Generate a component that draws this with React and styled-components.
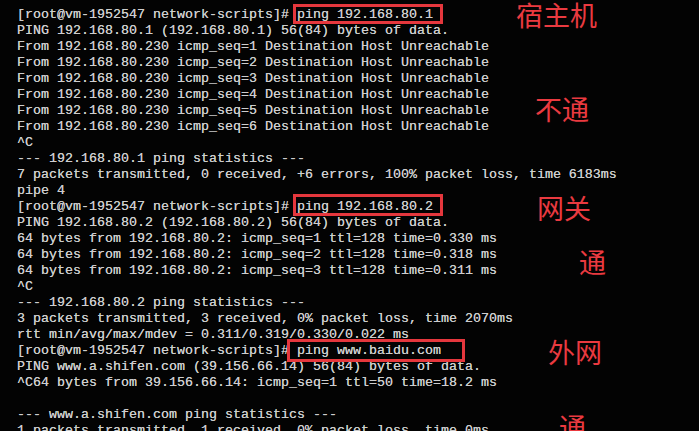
import React from "react";
import styled, { createGlobalStyle } from "styled-components";

const GlobalStyle = createGlobalStyle`
  html, body {
    margin: 0;
    padding: 0;
    background: #000;
  }
  * {
    box-sizing: border-box;
  }
`;

const Screen = styled.div`
  position: relative;
  width: 699px;
  height: 431px;
  overflow: hidden;
  background: #030303;
  padding: 7px 0 0 17px;
`;

const Line = styled.div`
  height: 16px;
  line-height: 16px;
  white-space: pre;
  font-family: "Liberation Mono", "DejaVu Sans Mono", monospace;
  font-size: 13.33px;
  color: #cdcdcd;
  text-shadow: 0 0 0.4px #cdcdcd;
`;

const Boxed = styled.span`
  position: relative;
  &::after {
    content: "";
    position: absolute;
    left: ${(p) => p.$l}px;
    right: ${(p) => p.$r}px;
    top: ${(p) => p.$t}px;
    bottom: ${(p) => p.$b}px;
    border: 3px solid #e5373d;
  }
`;

const Note = styled.div`
  position: absolute;
  left: ${(p) => p.$x}px;
  top: ${(p) => p.$y}px;
  font-family: "Noto Sans CJK SC", sans-serif;
  font-size: 27px;
  line-height: 1.1;
  color: #ea3a40;
`;

const prompt = "[root@vm-1952547 network-scripts]# ";
const unreach = (n) =>
  `From 192.168.80.230 icmp_seq=${n} Destination Host Unreachable`;
const reply = (n, t) =>
  `64 bytes from 192.168.80.2: icmp_seq=${n} ttl=128 time=${t} ms`;

export default function App() {
  return (
    <>
      <GlobalStyle />
      <Screen>
        <Line>
          {prompt}
          <Boxed $l={-4} $r={-10} $t={-3} $b={-2}>ping 192.168.80.1</Boxed>
        </Line>
        <Line>PING 192.168.80.1 (192.168.80.1) 56(84) bytes of data.</Line>
        {[1, 2, 3, 4, 5, 6].map((n) => (
          <Line key={n}>{unreach(n)}</Line>
        ))}
        <Line>^C</Line>
        <Line>--- 192.168.80.1 ping statistics ---</Line>
        <Line>
          7 packets transmitted, 0 received, +6 errors, 100% packet loss, time 6183ms
        </Line>
        <Line>pipe 4</Line>
        <Line>
          {prompt}
          <Boxed $l={-4} $r={-10} $t={-5} $b={-2}>ping 192.168.80.2</Boxed>
        </Line>
        <Line>PING 192.168.80.2 (192.168.80.2) 56(84) bytes of data.</Line>
        <Line>{reply(1, "0.330")}</Line>
        <Line>{reply(2, "0.318")}</Line>
        <Line>{reply(3, "0.311")}</Line>
        <Line>^C</Line>
        <Line>--- 192.168.80.2 ping statistics ---</Line>
        <Line>3 packets transmitted, 3 received, 0% packet loss, time 2070ms</Line>
        <Line>rtt min/avg/max/mdev = 0.311/0.319/0.330/0.022 ms</Line>
        <Line>
          {prompt}
          <Boxed $l={-10} $r={-24} $t={-4} $b={-4}>ping www.baidu.com</Boxed>
        </Line>
        <Line>PING www.a.shifen.com (39.156.66.14) 56(84) bytes of data.</Line>
        <Line>^C64 bytes from 39.156.66.14: icmp_seq=1 ttl=50 time=18.2 ms</Line>
        <Line> </Line>
        <Line>--- www.a.shifen.com ping statistics ---</Line>
        <Line>1 packets transmitted, 1 received, 0% packet loss, time 0ms</Line>

        <Note $x={516} $y={0}>宿主机</Note>
        <Note $x={535} $y={94}>不通</Note>
        <Note $x={537} $y={193}>网关</Note>
        <Note $x={579} $y={247}>通</Note>
        <Note $x={548} $y={337}>外网</Note>
        <Note $x={559} $y={412}>通</Note>
      </Screen>
    </>
  );
}
